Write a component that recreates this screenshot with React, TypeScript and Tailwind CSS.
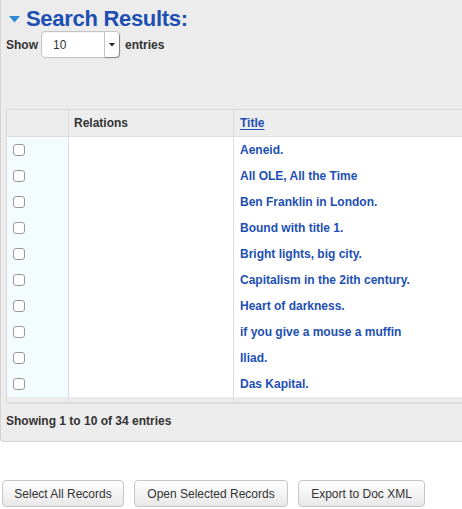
import React from "react";

const rows = [
  "Aeneid.",
  "All OLE, All the Time",
  "Ben Franklin in London.",
  "Bound with title 1.",
  "Bright lights, big city.",
  "Capitalism in the 2ith century.",
  "Heart of darkness.",
  "if you give a mouse a muffin",
  "Iliad.",
  "Das Kapital.",
];

export default function App() {
  return (
    <div className="w-[462px] h-[509px] bg-white overflow-hidden font-['Liberation_Sans',Arial,sans-serif] text-[#333]">
      <div className="relative bg-[#ececec] border-l border-b border-[#d4d4d4] rounded-bl-[4px] h-[442px] w-[500px] overflow-hidden">
        <div className="flex items-center h-[22px] mt-[8px] pl-[8px]">
          <svg width="11" height="7" viewBox="0 0 11 7" className="mt-[1px]">
            <path d="M0 0 L11 0 L5.5 6.5 Z" fill="#2b8bd3" />
          </svg>
          <span className="ml-[6px] text-[22px] font-bold leading-none text-[#1d4fb3] tracking-[-0.3px]">
            Search Results:
          </span>
        </div>
        <div className="flex items-center mt-[1px] pl-[5px] h-[27px]">
          <span className="text-[12px] font-bold">Show</span>
          <div className="ml-[3px] flex h-[27px] w-[79px] bg-white border border-[#c4c4c4] rounded-[4px] shadow-[inset_0_1px_1px_rgba(0,0,0,0.05)]">
            <span className="flex-1 pl-[11px] flex items-center text-[12px] text-[#333]">10</span>
            <div className="w-[15px] border-l border-[#c4c4c4] flex items-center justify-center bg-white rounded-r-[4px] shadow-[1px_1px_1px_rgba(0,0,0,0.35)]">
              <svg width="6" height="4" viewBox="0 0 6 4">
                <path d="M0 0 L6 0 L3 3.5 Z" fill="#222" />
              </svg>
            </div>
          </div>
          <span className="ml-[5px] text-[12px] font-bold">entries</span>
        </div>
        <div className="mt-[51px] ml-[5px] w-[490px] border-l border-t border-[#d8d8d8] rounded-tl-[3px] rounded-bl-[4px] overflow-hidden">
          <div className="flex h-[27px] bg-[#ededed] border-b border-[#dddddd] text-[12px] font-bold">
            <div className="w-[62px] border-r border-[#dddddd]" />
            <div className="w-[165px] border-r border-[#dddddd] flex items-center pl-[5px]">Relations</div>
            <div className="flex-1 flex items-center pl-[6px]">
              <span className="text-[#1d4fb3] underline underline-offset-[2px]">Title</span>
            </div>
          </div>
          {rows.map((t) => (
            <div key={t} className="flex h-[26px] text-[12px] font-bold">
              <div className="w-[62px] bg-[#f3fcfe] border-r border-[#dddddd] flex items-center pl-[6px]">
                <div className="w-[12px] h-[12px] rounded-[3px] border border-[#9a9a9a] bg-white" />
              </div>
              <div className="w-[165px] bg-white border-r border-[#dddddd]" />
              <div className="flex-1 bg-white flex items-center pl-[6px] text-[#1d4fb3]">{t}</div>
            </div>
          ))}
          <div className="flex h-[7px] bg-[#ececec] border-b-[2px] border-[#dcdcdc]">
            <div className="w-[62px] border-r border-[#dddddd]" />
            <div className="w-[165px] border-r border-[#dddddd]" />
          </div>
        </div>
        <div className="pl-[5px] mt-[8px] text-[12px] font-bold">Showing 1 to 10 of 34 entries</div>
      </div>
      <div className="flex gap-[10px] pl-[2px] mt-[38px]">
        <button className="h-[27px] w-[122px] rounded-[4px] border border-[#c6c6c6] bg-gradient-to-b from-white to-[#e8e8e8] text-[12px] text-[#333]">
          Select All Records
        </button>
        <button className="h-[27px] w-[154px] rounded-[4px] border border-[#c6c6c6] bg-gradient-to-b from-white to-[#e8e8e8] text-[12px] text-[#333]">
          Open Selected Records
        </button>
        <button className="h-[27px] w-[127px] rounded-[4px] border border-[#c6c6c6] bg-gradient-to-b from-white to-[#e8e8e8] text-[12px] text-[#333]">
          Export to Doc XML
        </button>
      </div>
    </div>
  );
}
